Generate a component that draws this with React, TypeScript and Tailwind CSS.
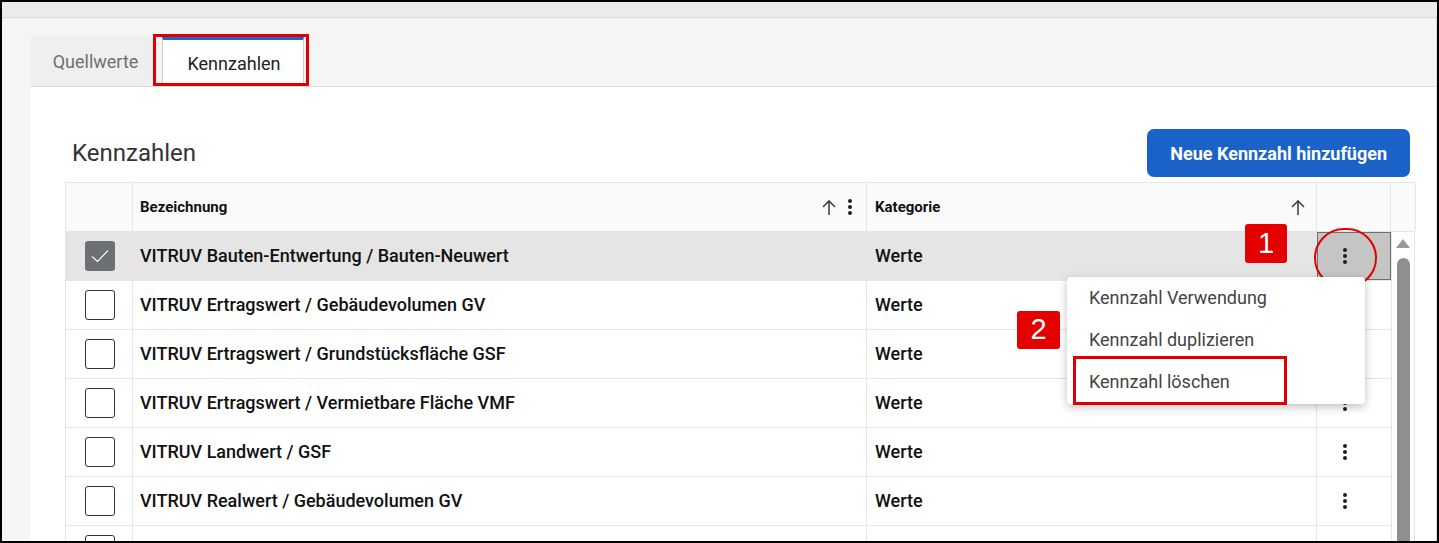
import React from "react";

const rows = [
  "VITRUV Bauten-Entwertung / Bauten-Neuwert",
  "VITRUV Ertragswert / Gebäudevolumen GV",
  "VITRUV Ertragswert / Grundstücksfläche GSF",
  "VITRUV Ertragswert / Vermietbare Fläche VMF",
  "VITRUV Landwert / GSF",
  "VITRUV Realwert / Gebäudevolumen GV",
  "",
];

const Kebab = () => (
  <div className="flex flex-col items-center gap-[2px]">
    <span className="w-[4px] h-[4px] rounded-full bg-[#1e1e24]" />
    <span className="w-[4px] h-[4px] rounded-full bg-[#1e1e24]" />
    <span className="w-[4px] h-[4px] rounded-full bg-[#1e1e24]" />
  </div>
);

const SortUp = () => (
  <svg width="16" height="17" viewBox="0 0 16 17" fill="none">
    <path d="M8 16V2M2 8l6-6 6 6" stroke="#444" strokeWidth="1.6" />
  </svg>
);

const Checkbox = ({ checked }: { checked: boolean }) =>
  checked ? (
    <div className="w-[30px] h-[30px] rounded-[3px] bg-[#6c6f74] flex items-center justify-center">
      <svg width="20" height="16" viewBox="0 0 20 16" fill="none">
        <path d="M2 8.5l5.5 5L18 2.5" stroke="#fff" strokeWidth="1.1" />
      </svg>
    </div>
  ) : (
    <div className="w-[30px] h-[30px] rounded-[3px] border border-[#333] bg-white" />
  );

const Badge = ({ n, className }: { n: string; className: string }) => (
  <div
    className={`absolute flex items-center justify-center rounded-[3px] bg-[#e50000] text-white text-[29px] font-['Liberation_Sans',sans-serif] ${className}`}
  >
    {n}
  </div>
);

const App = () => {
  return (
    <div className="w-[1439px] h-[543px] overflow-hidden border-2 border-black bg-[#f5f5f5] flex flex-col font-['Roboto',sans-serif]">
      {/* top band */}
      <div className="h-[16px] shrink-0 bg-[#ebebeb] border-b border-[#dadada]" />

      <div className="flex-1 flex flex-col pl-[28px] border-r border-[#dcdcdc] min-h-0">
        {/* tabs */}
        <div className="relative flex pt-[19px] shrink-0">
          <div className="w-[125px] h-[49px] bg-[#efefef] flex items-center justify-center pl-[6px] text-[18px] text-[#707070]">
            Quellwerte
          </div>
          <div className="ml-[7px] w-[142px] h-[49px] bg-white border-t-[3px] border-t-[#1a66cc] border-x border-x-[#cfcfcf] flex items-center justify-center pl-[2px] text-[18px] text-[#222]">
            Kennzahlen
          </div>
          <div className="absolute left-[123px] top-[16px] w-[156px] h-[52px] border-[3px] border-[#e00000]" />
        </div>

        {/* panel */}
        <div className="flex-1 bg-white border-t border-[#dddddd] pl-[35px] pr-[21px] pt-[42px] min-h-0">
          <div className="flex items-center justify-between pr-[5px]">
            <h1 className="pl-[7px] text-[24px] text-[#333] font-normal">Kennzahlen</h1>
            <button className="h-[48px] px-[23px] rounded-[7px] bg-[#1a62c8] text-white text-[18px] font-bold">
              Neue Kennzahl hinzufügen
            </button>
          </div>

          <div className="relative mt-[5px] w-[1350px] border-t border-l border-[#e6e6e6]">
            {/* header */}
            <div className="grid grid-cols-[67px_734px_450px_74px_25px] h-[49px] bg-[#fafafa] border-b border-[#e6e6e6] text-[15px] font-bold text-[#111]">
              <div className="border-r border-[#e6e6e6]" />
              <div className="flex items-center justify-between pl-[7px] pr-[14px] border-r border-[#e6e6e6]">
                <span>Bezeichnung</span>
                <div className="flex items-center gap-[11px]">
                  <SortUp />
                  <Kebab />
                </div>
              </div>
              <div className="flex items-center justify-between pl-[8px] pr-[10px] border-r border-[#e6e6e6]">
                <span>Kategorie</span>
                <SortUp />
              </div>
              <div className="border-r border-[#e6e6e6]" />
              <div className="border-r border-[#e6e6e6]" />
            </div>

            {/* body */}
            <div className="flex">
              <div className="w-[1325px]">
                {rows.map((name, i) => (
                  <div
                    key={i}
                    className={`grid grid-cols-[67px_734px_450px_74px] h-[49px] border-b border-[#e6e6e6] text-[18px] font-medium text-[#111] ${
                      i === 0 ? "bg-[#e5e5e5]" : "bg-white"
                    }`}
                  >
                    <div className="flex items-center justify-center pl-[2px] border-r border-[#e6e6e6]">
                      <Checkbox checked={i === 0} />
                    </div>
                    <div className="flex items-center pl-[7px] pb-[2px] border-r border-[#e6e6e6]">{name}</div>
                    <div className="flex items-center pl-[8px] pb-[2px] border-r border-[#e6e6e6]">
                      {name ? "Werte" : ""}
                    </div>
                    <div className="flex items-center">
                      {i === 0 ? (
                        <div className="w-full h-full bg-[#c5c5c5] border border-[#707070] flex items-center pl-[25px]">
                          <Kebab />
                        </div>
                      ) : name ? (
                        <div className="pl-[26px]">
                          <Kebab />
                        </div>
                      ) : null}
                    </div>
                  </div>
                ))}
              </div>

              {/* scrollbar */}
              <div className="w-[25px] border-l border-r border-[#e6e6e6] flex flex-col items-center pt-[7px]">
                <div className="w-0 h-0 border-l-[7px] border-r-[7px] border-b-[9px] border-l-transparent border-r-transparent border-b-[#999]" />
                <div className="mt-[10px] w-[13px] h-[300px] rounded-full bg-[#8f8f8f]" />
              </div>
            </div>

            {/* annotations and menu */}
            <div className="absolute left-[1248px] top-[45px] w-[63px] h-[60px] rounded-full border-2 border-[#e00000]" />
            <Badge n="1" className="left-[1179px] top-[41px] w-[42px] h-[39px]" />
            <Badge n="2" className="left-[951px] top-[128px] w-[43px] h-[38px]" />

            <div className="absolute left-[1001px] top-[94px] w-[298px] h-[127px] bg-white rounded-[4px] shadow-[0_3px_10px_rgba(0,0,0,0.25)] text-[18px] text-[#444]">
              <div className="h-[42px] flex items-center pl-[22px] pb-[2px]">Kennzahl Verwendung</div>
              <div className="h-[42px] flex items-center pl-[22px] pb-[2px]">Kennzahl duplizieren</div>
              <div className="h-[42px] flex items-center pl-[22px] pb-[2px]">Kennzahl löschen</div>
            </div>
            <div className="absolute left-[1007px] top-[173px] w-[214px] h-[49px] border-[3px] border-[#e00000]" />
          </div>
        </div>
      </div>
    </div>
  );
};

export default App;
